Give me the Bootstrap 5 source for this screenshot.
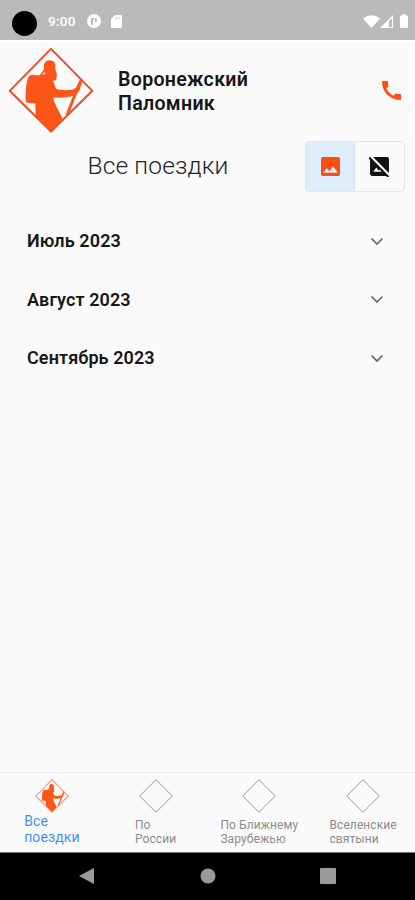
<!DOCTYPE html>
<html lang="ru">
<head>
<meta charset="utf-8">
<meta name="viewport" content="width=device-width, initial-scale=1">
<title>Воронежский Паломник</title>
<link href="https://cdn.jsdelivr.net/npm/bootstrap@5.3.0/dist/css/bootstrap.min.css" rel="stylesheet">
<style>
body{font-family:Roboto,sans-serif;background:#fafafa;color:#161616;height:900px;overflow:hidden}
svg{display:block;flex:none}
.status{height:40px;background:#bababa;color:#fff;padding:2px 7px 0 12px}
.lens{width:25px;height:25px;background:#000;margin-top:9px}
.clock{font-size:13.5px;font-weight:500;letter-spacing:.3px;margin-left:11px;width:35px}
.card-icon{margin-left:10px}
.battery{margin-left:7px}
.top-bar{height:100px;padding:0 14px 0 8px;box-shadow:inset 0 2px 2px #fff}
.brand{font-size:19.6px;line-height:24px;font-weight:600;letter-spacing:.3px;margin-left:24px;margin-top:4px}
.title-row{height:52px;padding-right:10px}
.page-title{font-size:24.5px;font-weight:300;letter-spacing:.15px;padding-left:11px;line-height:52px;color:#222}
.toggle{width:100px;height:51px;border:1px solid #e4e5e7;border-radius:4px;overflow:hidden;margin-top:1px}
.toggle .on{background:#deedf9;border-right:1px solid #dde3e8}
.months{padding:19.4px 28px 0 27px}
.month{height:58.5px;font-size:18px;font-weight:600;letter-spacing:.1px}
.tabs{height:81px;border-top:1px solid #ececec;color:#8c8c8c;font-size:12px;line-height:14px;letter-spacing:.1px;padding-top:6px}
.tabs .tab{width:103.75px}
.tabs .cap{margin-top:5px}
.tabs .sel{color:#4392f1;font-size:14px;line-height:16px}
.tabs .sel .cap{margin-top:0}
.sys{height:47px;background:#000;box-shadow:0 -1px #777;padding-bottom:1px}
</style>
<script src="https://cdn.jsdelivr.net/npm/bootstrap@5.3.0/dist/js/bootstrap.bundle.min.js"></script>
</head>
<body class="d-flex flex-column m-0">
<svg width="0" height="0" class="position-absolute" aria-hidden="true">
<symbol id="pilgrim" viewBox="24 20 258 260">
<path fill="#fb5518" d="M117 105L124 98L132 86L132 72Q135 59 150 59Q164 60 166 72L166 86L171 102L168 119L159 121L168 145C185 151 203 149 217 148L228 142L241 114L249 117L238 151L230 162L205 224L197 222L219 166L208 169C190 173 176 171 160 170C162 190 174 204 188 235L152 273L107 225L106 189L82 187Q76 186 77 178C76 160 78 130 84 112Q88 103 98 103Z"/>
<path fill="#fafafa" d="M129 101L134 94L136 98L131 104Z"/>
</symbol>
</svg>

<header class="status d-flex align-items-center">
<div class="lens rounded-circle align-self-start"></div>
<span class="clock">9:00</span>
<svg class="ms-1" width="14" height="14" viewBox="0 0 14 14"><circle cx="7" cy="7" r="7" fill="#fff"/><path fill="#bababa" d="M4 4h3v2H6v5H4zM8 4a2.200 2.200 0 0 1 0 4.400z"/></svg>
<svg class="card-icon" width="11" height="13" viewBox="0 0 11 13"><path fill="#fff" d="M4 0h6a1 1 0 0 1 1 1v11a1 1 0 0 1-1 1H1a1 1 0 0 1-1-1V4z"/><path stroke="#bababa" stroke-width=".6" d="M4.500 2v2M6.500 2v2M8.500 2v2"/></svg>
<div class="ms-auto d-flex align-items-center">
<svg width="17" height="13" viewBox="0 0 17 13"><path fill="#fff" d="M0 3.500Q8.500-3 17 3.500L8.500 13Z"/></svg>
<svg width="13" height="13" viewBox="0 0 13 13"><path fill="#fff" fill-rule="evenodd" d="M0 13L13 0V13ZM9 6V12H12V3Z"/></svg>
<svg class="battery" width="8" height="14" viewBox="0 0 8 14"><path fill="#fff" d="M2.500 0h3v1.500H7a1 1 0 0 1 1 1V13a1 1 0 0 1-1 1H1a1 1 0 0 1-1-1V2.500a1 1 0 0 1 1-1h1.500z"/></svg>
</div>
</header>

<div class="top-bar d-flex align-items-center">
<svg width="86" height="87" viewBox="24 20 258 260"><path d="M153 25L277 151L153 273L29 151Z" fill="none" stroke="#ee4d2b" stroke-width="6" stroke-linejoin="round"/><use href="#pilgrim" x="24" y="20" width="258" height="260"/></svg>
<div class="brand">Воронежский<br>Паломник</div>
<svg class="ms-auto" width="19" height="19" viewBox="3 3 18 18"><path fill="#fb4e14" d="M20.010 15.380c-1.230 0-2.420-.2-3.530-.56-.35-.12-.74-.03-1.010.24l-1.570 1.970c-2.830-1.350-5.480-3.900-6.890-6.830l1.950-1.660c.27-.28.35-.67.24-1.020-.37-1.110-.56-2.300-.56-3.530 0-.54-.45-.99-.99-.99H4.190C3.650 3 3 3.240 3 3.990 3 13.280 10.730 21 20.010 21c.71 0 .99-.63.99-1.180v-3.450c0-.54-.45-.99-.99-.99z"/></svg>
</div>

<div class="title-row d-flex">
<h1 class="page-title flex-grow-1 text-center mb-0">Все поездки</h1>
<div class="toggle d-flex">
<div class="on w-50 d-flex align-items-center justify-content-center"><svg width="19" height="19" viewBox="3 3 18 18"><path fill="#fb4e14" d="M21 19V5c0-1.100-.9-2-2-2H5c-1.100 0-2 .9-2 2v14c0 1.100.9 2 2 2h14c1.100 0 2-.9 2-2zM8.500 13.500l2.500 3.010L14.500 12l4.500 6H5l3.500-4.500z"/></svg></div>
<div class="w-50 d-flex align-items-center justify-content-center"><svg width="21" height="21" viewBox="2 2 20 20"><path fill="#111" d="M21 5c0-1.100-.9-2-2-2H5.830L21 18.170V5zM2.810 2.810L1.390 4.220 3 5.830V19c0 1.100.9 2 2 2h13.170l1.610 1.610 1.410-1.410L2.810 2.810zM6 17l3-4 2.250 3 .82-1.100 2.100 2.100H6z"/></svg></div>
</div>
</div>

<main class="months flex-grow-1">
<div class="month d-flex align-items-center justify-content-between">Июль 2023<svg width="20" height="14" viewBox="0 0 20 14"><path d="M4.500 4.500L10 10L15.500 4.500" fill="none" stroke="#666" stroke-width="1.700"/></svg></div>
<div class="month d-flex align-items-center justify-content-between">Август 2023<svg width="20" height="14" viewBox="0 0 20 14"><path d="M4.500 4.500L10 10L15.500 4.500" fill="none" stroke="#666" stroke-width="1.700"/></svg></div>
<div class="month d-flex align-items-center justify-content-between">Сентябрь 2023<svg width="20" height="14" viewBox="0 0 20 14"><path d="M4.500 4.500L10 10L15.500 4.500" fill="none" stroke="#666" stroke-width="1.700"/></svg></div>
</main>

<nav class="tabs d-flex">
<div class="tab sel d-flex flex-column align-items-center"><svg width="34" height="34" viewBox="24 20 258 260"><path d="M153 25L277 151L153 273L29 151Z" fill="none" stroke="#ff8d6b" stroke-width="8"/><use href="#pilgrim" x="24" y="20" width="258" height="260"/></svg><div class="cap">Все<br>поездки</div></div>
<div class="tab d-flex flex-column align-items-center"><svg width="34" height="34" viewBox="0 0 34 34"><path d="M17 .7L33.300 17L17 33.300L.7 17Z" fill="none" stroke="#999"/></svg><div class="cap">По<br>России</div></div>
<div class="tab d-flex flex-column align-items-center"><svg width="34" height="34" viewBox="0 0 34 34"><path d="M17 .7L33.300 17L17 33.300L.7 17Z" fill="none" stroke="#999"/></svg><div class="cap">По Ближнему<br>Зарубежью</div></div>
<div class="tab d-flex flex-column align-items-center"><svg width="34" height="34" viewBox="0 0 34 34"><path d="M17 .7L33.300 17L17 33.300L.7 17Z" fill="none" stroke="#999"/></svg><div class="cap">Вселенские<br>святыни</div></div>
</nav>
<footer class="sys d-flex justify-content-center align-items-center">
<svg width="260" height="18" viewBox="0 0 260 18" fill="#9b9b9b"><path d="M1 9L16 1V17Z"/><circle cx="130" cy="9" r="7.500"/><rect x="242" y="1" width="16" height="16" rx="1"/></svg>
</footer>
</body>
</html>
